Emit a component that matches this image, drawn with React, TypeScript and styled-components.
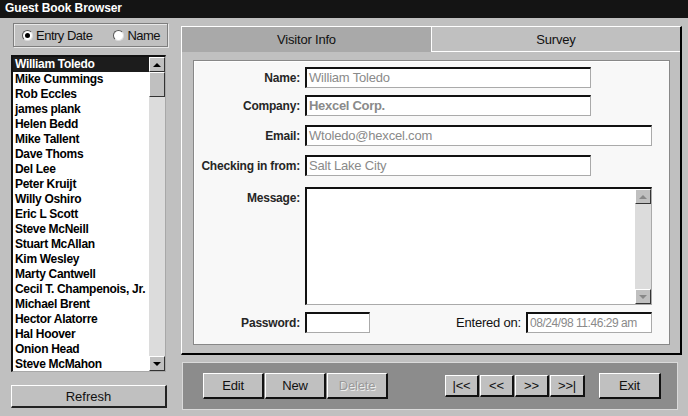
import React from "react";
import styled, { createGlobalStyle, css } from "styled-components";

const Global = createGlobalStyle`
  html, body { margin: 0; padding: 0; background: #c0c0c0; }
  body { font-family: "Liberation Sans", Arial, Helvetica, sans-serif; }
  * { box-sizing: border-box; }
`;

const Window = styled.div`
  width: 688px;
  height: 416px;
  display: flex;
  flex-direction: column;
  background: #c0c0c0;
  overflow: hidden;
`;

const TitleBar = styled.div`
  height: 18px;
  background: #141414;
  color: #fff;
  font-weight: bold;
  font-size: 12px;
  line-height: 17px;
  padding-left: 5px;
  letter-spacing: -0.1px;
`;

const Body = styled.div`
  flex: 1;
  display: flex;
`;

const LeftCol = styled.div`
  width: 168px;
  padding: 5px 0 0 11px;
  display: flex;
  flex-direction: column;
`;

const RadioBox = styled.div`
  margin-left: 2px;
  width: 155px;
  height: 24px;
  border: 1px solid #7e7e7e;
  box-shadow: inset 1px 1px 0 #e8e8e8, 1px 1px 0 #e8e8e8;
  display: flex;
  align-items: center;
  padding-left: 8px;
  font-size: 13px;
  color: #111;
`;

const RadioLabel = styled.label<{ $ml?: number }>`
  display: flex;
  align-items: center;
  gap: 3px;
  margin-left: ${(p) => p.$ml ?? 0}px;
  letter-spacing: -0.5px;
`;

const RadioCircle = styled.span<{ $on?: boolean }>`
  width: 11px;
  height: 11px;
  border-radius: 50%;
  background: #fff;
  border: 1px solid #555;
  border-right-color: #ddd;
  border-bottom-color: #ddd;
  display: flex;
  align-items: center;
  justify-content: center;
  &::after {
    content: "";
    width: 5px;
    height: 5px;
    border-radius: 50%;
    background: ${(p) => (p.$on ? "#000" : "transparent")};
  }
`;

const ListBox = styled.div`
  margin-top: 8px;
  width: 155px;
  height: 317px;
  background: #fff;
  border-top: 2px solid #111;
  border-left: 2px solid #111;
  border-right: 1px solid #a8a8a8;
  border-bottom: 1px solid #a8a8a8;
  display: flex;
`;

const ListItems = styled.div`
  flex: 1;
  overflow: hidden;
`;

const ListItem = styled.div<{ $selected?: boolean }>`
  height: 15px;
  line-height: 15px;
  padding-left: 2px;
  font-size: 12px;
  font-weight: bold;
  white-space: nowrap;
  letter-spacing: -0.3px;
  background: ${(p) => (p.$selected ? "#1c1c1c" : "transparent")};
  color: ${(p) => (p.$selected ? "#fff" : "#000")};
`;

const ScrollBar = styled.div`
  width: 16px;
  display: flex;
  flex-direction: column;
  background: #dedede;
`;

const bevel = css`
  background: #c0c0c0;
  border-top: 1px solid #fff;
  border-left: 1px solid #fff;
  border-right: 1px solid #333;
  border-bottom: 1px solid #333;
`;

const ScrollBtn = styled.div`
  ${bevel};
  height: 15px;
  display: flex;
  align-items: center;
  justify-content: center;
`;

const Arrow = styled.span<{ $down?: boolean; $dim?: boolean }>`
  width: 0;
  height: 0;
  border-left: 4px solid transparent;
  border-right: 4px solid transparent;
  ${(p) =>
    p.$down
      ? `border-top: 4px solid ${p.$dim ? "#888" : "#000"};`
      : `border-bottom: 4px solid ${p.$dim ? "#888" : "#000"};`}
`;

const Thumb = styled.div`
  ${bevel};
  height: 25px;
`;

const Track = styled.div`
  flex: 1;
  background-color: #dcdcdc;
  background-image: radial-gradient(#c8c8c8 0.6px, transparent 0.7px);
  background-size: 2px 2px;
`;

const RefreshButton = styled.button`
  margin-top: 13px;
  width: 156px;
  height: 23px;
  background: #c0c0c0;
  border-top: 1px solid #fff;
  border-left: 1px solid #fff;
  border-right: 2px solid #222;
  border-bottom: 2px solid #222;
  font-family: inherit;
  font-size: 13px;
  color: #111;
  padding: 0;
`;

const RightCol = styled.div`
  margin-left: 13px;
  padding-top: 8px;
  width: 501px;
  display: flex;
  flex-direction: column;
`;

const TabPanel = styled.div`
  height: 329px;
  border-top: 1px solid #fff;
  border-left: 1px solid #fff;
  border-right: 2px solid #000;
  border-bottom: 2px solid #000;
  display: flex;
  flex-direction: column;
`;

const TabRow = styled.div`
  height: 25px;
  display: flex;
`;

const Tab = styled.div<{ $active?: boolean }>`
  display: flex;
  align-items: center;
  justify-content: center;
  font-size: 13px;
  color: #111;
  letter-spacing: -0.2px;
  ${(p) =>
    p.$active
      ? css`
          width: 249px;
          background: #a9a9a9;
        `
      : css`
          flex: 1;
          background: #c0c0c0;
          border-left: 1px solid #fff;
          border-bottom: 1px solid #fff;
        `}
`;

const TabContent = styled.div`
  flex: 1;
  padding: 8px 10px 8px 11px;
  display: flex;
`;

const FormPanel = styled.div`
  flex: 1;
  background: #f8f8f8;
  border: 1px solid #888;
  box-shadow: inset 1px 1px 0 #fff;
  padding-top: 6px;
  display: flex;
  flex-direction: column;
`;

const Row = styled.div<{ $mt?: number; $top?: boolean }>`
  display: flex;
  align-items: ${(p) => (p.$top ? "flex-start" : "center")};
  margin-top: ${(p) => p.$mt ?? 0}px;
`;

const Label = styled.div<{ $top?: boolean }>`
  width: 106px;
  margin-right: 5px;
  text-align: right;
  font-size: 12px;
  font-weight: bold;
  color: #262626;
  letter-spacing: -0.2px;
  white-space: nowrap;
  padding-top: ${(p) => (p.$top ? "4px" : "0")};
`;

const PlainLabel = styled.div`
  margin-left: auto;
  margin-right: 5px;
  font-size: 13px;
  color: #111;
  letter-spacing: -0.2px;
`;

const sunken = css`
  background: #fff;
  border-top: 2px solid #111;
  border-left: 2px solid #111;
  border-right: 1px solid #aaa;
  border-bottom: 1px solid #aaa;
`;

const Field = styled.div<{ $w: number; $bold?: boolean; $mr?: number; $small?: boolean }>`
  ${sunken};
  width: ${(p) => p.$w}px;
  height: 21px;
  line-height: 18px;
  padding-left: 2px;
  font-size: ${(p) => (p.$small ? 12 : 13)}px;
  color: #8a8a8a;
  font-weight: ${(p) => (p.$bold ? "bold" : "normal")};
  letter-spacing: ${(p) => (p.$small ? "-0.45px" : p.$bold ? "-0.3px" : "-0.2px")};
  white-space: nowrap;
  overflow: hidden;
  margin-right: ${(p) => p.$mr ?? 0}px;
`;

const MessageBox = styled.div`
  ${sunken};
  width: 347px;
  height: 118px;
  display: flex;
  justify-content: flex-end;
`;

const MsgScroll = styled.div`
  width: 16px;
  display: flex;
  flex-direction: column;
`;

const BottomPanel = styled.div`
  margin-top: 7px;
  margin-left: 1px;
  width: 496px;
  height: 48px;
  background: #8c8c8c;
  border: 1px solid #dadada;
  display: flex;
  align-items: center;
  padding-left: 20px;
`;

const Group = styled.div<{ $ml?: number }>`
  display: flex;
  gap: 1px;
  margin-left: ${(p) => p.$ml ?? 0}px;
`;

const Btn = styled.button<{ $w: number; $h: number; $disabled?: boolean }>`
  width: ${(p) => p.$w}px;
  height: ${(p) => p.$h}px;
  background: #c0c0c0;
  border-top: 1px solid #fff;
  border-left: 1px solid #fff;
  border-right: 2px solid #111;
  border-bottom: 2px solid #111;
  font-family: inherit;
  font-size: 13px;
  padding: 0;
  color: ${(p) => (p.$disabled ? "#9a9a9a" : "#111")};
  text-shadow: ${(p) => (p.$disabled ? "1px 1px 0 #eee" : "none")};
  letter-spacing: -0.2px;
`;

const names = [
  "William Toledo",
  "Mike Cummings",
  "Rob Eccles",
  "james plank",
  "Helen Bedd",
  "Mike Tallent",
  "Dave Thoms",
  "Del Lee",
  "Peter Kruijt",
  "Willy Oshiro",
  "Eric L Scott",
  "Steve McNeill",
  "Stuart McAllan",
  "Kim Wesley",
  "Marty Cantwell",
  "Cecil T. Champenois, Jr.",
  "Michael Brent",
  "Hector Alatorre",
  "Hal Hoover",
  "Onion Head",
  "Steve McMahon",
];

export default function App() {
  return (
    <Window>
      <Global />
      <TitleBar>Guest Book Browser</TitleBar>
      <Body>
        <LeftCol>
          <RadioBox>
            <RadioLabel>
              <RadioCircle $on />
              Entry Date
            </RadioLabel>
            <RadioLabel $ml={21}>
              <RadioCircle />
              Name
            </RadioLabel>
          </RadioBox>
          <ListBox>
            <ListItems>
              {names.map((n, i) => (
                <ListItem key={n} $selected={i === 0}>
                  {n}
                </ListItem>
              ))}
            </ListItems>
            <ScrollBar>
              <ScrollBtn>
                <Arrow />
              </ScrollBtn>
              <Thumb />
              <Track />
              <ScrollBtn>
                <Arrow $down />
              </ScrollBtn>
            </ScrollBar>
          </ListBox>
          <RefreshButton>Refresh</RefreshButton>
        </LeftCol>
        <RightCol>
          <TabPanel>
            <TabRow>
              <Tab $active>Visitor Info</Tab>
              <Tab>Survey</Tab>
            </TabRow>
            <TabContent>
              <FormPanel>
                <Row>
                  <Label>Name:</Label>
                  <Field $w={286}>William Toledo</Field>
                </Row>
                <Row $mt={7}>
                  <Label>Company:</Label>
                  <Field $w={286} $bold>
                    Hexcel Corp.
                  </Field>
                </Row>
                <Row $mt={9}>
                  <Label>Email:</Label>
                  <Field $w={347}>Wtoledo@hexcel.com</Field>
                </Row>
                <Row $mt={9}>
                  <Label>Checking in from:</Label>
                  <Field $w={286}>Salt Lake City</Field>
                </Row>
                <Row $mt={11} $top>
                  <Label $top>Message:</Label>
                  <MessageBox>
                    <MsgScroll>
                      <ScrollBtn>
                        <Arrow $dim />
                      </ScrollBtn>
                      <Track />
                      <ScrollBtn>
                        <Arrow $down $dim />
                      </ScrollBtn>
                    </MsgScroll>
                  </MessageBox>
                </Row>
                <Row $mt={7}>
                  <Label>Password:</Label>
                  <Field $w={65} />
                  <PlainLabel>Entered on:</PlainLabel>
                  <Field $w={126} $mr={17} $small>
                    08/24/98 11:46:29 am
                  </Field>
                </Row>
              </FormPanel>
            </TabContent>
          </TabPanel>
          <BottomPanel>
            <Group>
              <Btn $w={61} $h={26}>Edit</Btn>
              <Btn $w={61} $h={26}>New</Btn>
              <Btn $w={61} $h={26} $disabled>
                Delete
              </Btn>
            </Group>
            <Group $ml={57}>
              <Btn $w={34} $h={22}>|&lt;&lt;</Btn>
              <Btn $w={34} $h={22}>&lt;&lt;</Btn>
              <Btn $w={34} $h={22}>&gt;&gt;</Btn>
              <Btn $w={35} $h={22}>&gt;&gt;|</Btn>
            </Group>
            <Group $ml={14}>
              <Btn $w={62} $h={26}>Exit</Btn>
            </Group>
          </BottomPanel>
        </RightCol>
      </Body>
    </Window>
  );
}
